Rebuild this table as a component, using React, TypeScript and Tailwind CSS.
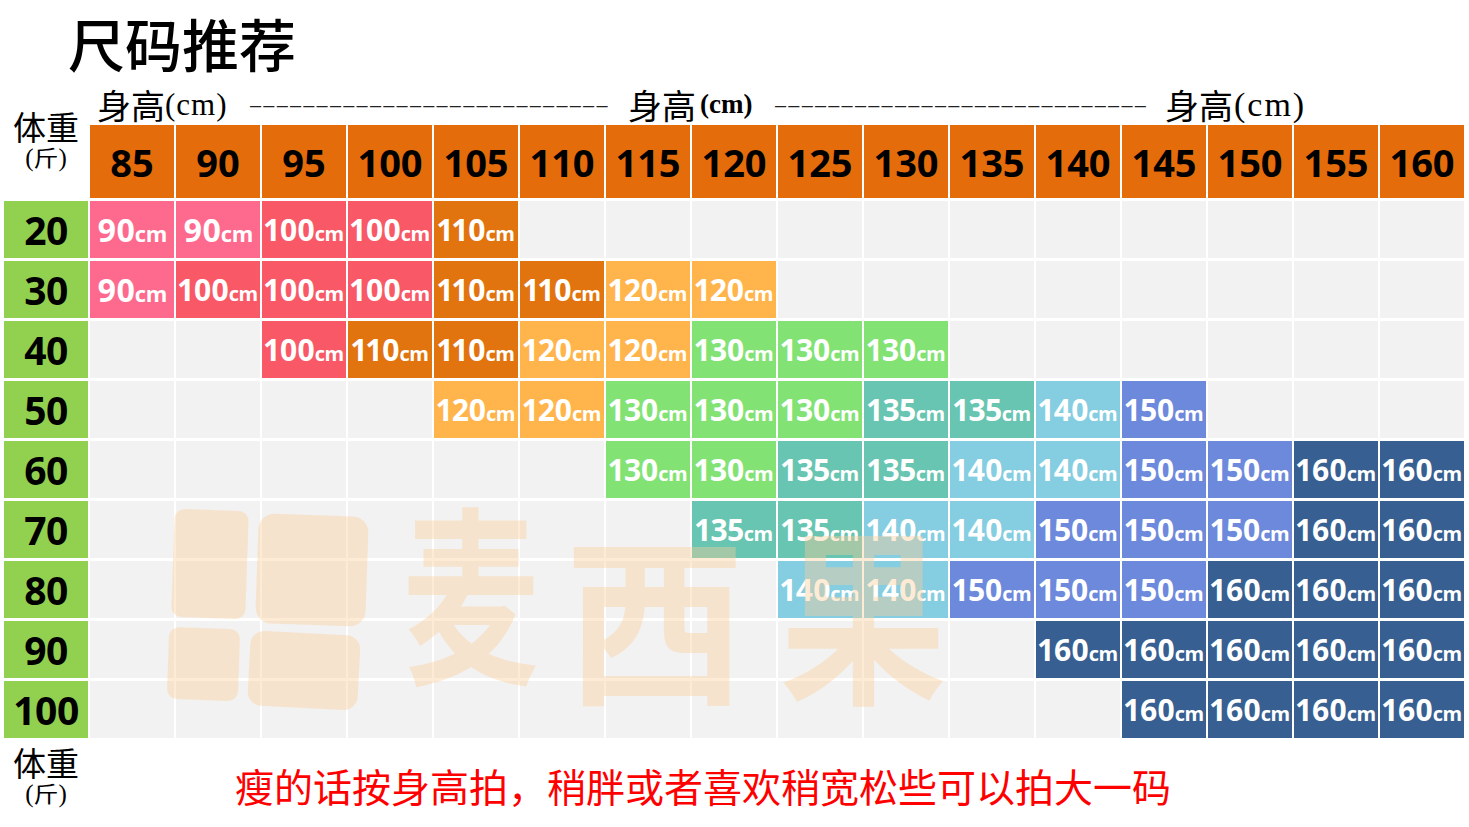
import React from "react";

const cols = [85, 90, 95, 100, 105, 110, 115, 120, 125, 130, 135, 140, 145, 150, 155, 160];

const rowsData: { w: number; start: number; vals: number[] }[] = [
  { w: 20, start: 0, vals: [90, 90, 100, 100, 110] },
  { w: 30, start: 0, vals: [90, 100, 100, 100, 110, 110, 120, 120] },
  { w: 40, start: 2, vals: [100, 110, 110, 120, 120, 130, 130, 130] },
  { w: 50, start: 4, vals: [120, 120, 130, 130, 130, 135, 135, 140, 150] },
  { w: 60, start: 6, vals: [130, 130, 135, 135, 140, 140, 150, 150, 160, 160] },
  { w: 70, start: 7, vals: [135, 135, 140, 140, 150, 150, 150, 160, 160] },
  { w: 80, start: 8, vals: [140, 140, 150, 150, 150, 160, 160, 160] },
  { w: 90, start: 11, vals: [160, 160, 160, 160, 160] },
  { w: 100, start: 12, vals: [160, 160, 160, 160] },
];

const colorOf: Record<number, string> = {
  90: "bg-[#fe6a8d]",
  100: "bg-[#f95966]",
  110: "bg-[#e2740f]",
  120: "bg-[#ffb54b]",
  130: "bg-[#82e374]",
  135: "bg-[#68c5b2]",
  140: "bg-[#85cde0]",
  150: "bg-[#6d89dc]",
  160: "bg-[#375f92]",
};

const DASHES_A = "–".repeat(27);
const DASHES_B = "–".repeat(28);

function Cell({ v }: { v: number | null }) {
  if (v === null) return <div className="bg-[#f2f2f2]" />;
  const two = v < 100;
  return (
    <div
      className={`${colorOf[v]} flex items-baseline justify-center font-['Open_Sans',sans-serif] font-bold leading-none text-white tracking-[-0.5px] proportional-nums ${two ? "pt-[13px]" : "pt-[14px]"}`}
    >
      <span className={two ? "text-[32px]" : "text-[30px]"}>{v}</span>
      <span className={two ? "text-[22px]" : "text-[20px]"}>cm</span>
    </div>
  );
}

function WeightLabel({ className }: { className?: string }) {
  return (
    <div className={`flex flex-col items-center text-black ${className ?? ""}`}>
      <span className="text-[33px] leading-none">体重</span>
      <span className="mt-[2px] flex items-center text-[25px] leading-none">
        <span className="font-['Liberation_Serif',serif] text-[25px]">(</span>
        <span className="scale-y-[0.85]">斤</span>
        <span className="font-['Liberation_Serif',serif] text-[25px]">)</span>
      </span>
    </div>
  );
}

export default function App() {
  const matrix = rowsData.map((r) => {
    const cells: (number | null)[] = cols.map(() => null);
    r.vals.forEach((v, i) => {
      cells[r.start + i] = v;
    });
    return { w: r.w, cells };
  });

  const wm = "text-[rgba(252,205,150,0.4)]";

  return (
    <div className="relative h-[827px] w-[1469px] overflow-hidden bg-white font-['Noto_Sans_CJK_SC',sans-serif] text-black">
      {/* Title */}
      <div className="flex h-[84px] items-center pl-[68px]">
        <h1 className="text-[57px] leading-none font-medium">尺码推荐</h1>
      </div>

      {/* Height labels */}
      <div className="flex h-[41px] items-center">
        <div className="ml-[97px] flex w-[153px] items-center">
          <span className="text-[34px] leading-none">身高</span>
          <span className="font-['Liberation_Serif',serif] text-[31px] leading-none tracking-[1px]">(cm)</span>
        </div>
        <div className="w-[362px] whitespace-nowrap font-['Liberation_Sans',sans-serif] text-[20px] leading-none tracking-[2.2px] text-[#222]">
          {DASHES_A}
        </div>
        <div className="ml-[16px] flex w-[147px] items-center">
          <span className="text-[34px] leading-none">身高</span>
          <span className="ml-[4px] font-['Liberation_Serif',serif] text-[27px] font-bold leading-none">(cm)</span>
        </div>
        <div className="w-[375px] whitespace-nowrap font-['Liberation_Sans',sans-serif] text-[20px] leading-none tracking-[2.2px] text-[#222]">
          {DASHES_B}
        </div>
        <div className="ml-[15px] flex items-center">
          <span className="text-[34px] leading-none">身高</span>
          <span className="ml-[1px] font-['Liberation_Serif',serif] text-[34px] leading-none tracking-[2px]">(cm)</span>
        </div>
      </div>

      {/* Grid */}
      <div className="ml-[4px] grid grid-cols-[repeat(17,84px)] grid-rows-[73px_repeat(9,57px)] gap-x-[2px] gap-y-[3px]">
        <WeightLabel className="-mt-[15px]" />
        {cols.map((c) => (
          <div
            key={c}
            className="flex items-center justify-center bg-[#e46c0a] font-['Open_Sans',sans-serif] text-[38px] font-bold leading-none text-black"
          >
            {c}
          </div>
        ))}
        {matrix.map((r) => (
          <React.Fragment key={r.w}>
            <div className="flex items-center justify-center bg-[#92d050] font-['Open_Sans',sans-serif] text-[39px] font-bold leading-none text-black tracking-[-0.5px]">
              {r.w}
            </div>
            {r.cells.map((v, i) => (
              <Cell key={i} v={v} />
            ))}
          </React.Fragment>
        ))}
      </div>

      {/* Bottom */}
      <div className="flex h-[89px] items-start">
        <WeightLabel className="ml-[4px] mt-[8px] w-[84px]" />
        <div className="ml-[147px] mt-[28px] text-[39px] leading-none text-[#ff0000]">
          瘦的话按身高拍，稍胖或者喜欢稍宽松些可以拍大一码
        </div>
      </div>

      {/* Watermark logo */}
      <svg
        className="pointer-events-none absolute left-[165px] top-[505px]"
        width="205"
        height="210"
        viewBox="0 0 205 210"
        aria-hidden="true"
      >
        <g fill="rgba(252,205,150,0.4)">
          <rect x="8" y="5" width="74" height="108" rx="10" transform="rotate(2 45 59)" />
          <rect x="92" y="10" width="110" height="110" rx="16" transform="rotate(2 147 65)" />
          <rect x="3" y="123" width="71" height="72" rx="10" transform="rotate(2 38 159)" />
          <rect x="84" y="128" width="110" height="75" rx="14" transform="rotate(3 139 165)" />
        </g>
      </svg>
      <div aria-hidden="true" className={`pointer-events-none absolute left-[376px] top-[492px] scale-x-[0.72] text-[190px] leading-none font-bold ${wm}`}>
        麦
      </div>
      <div aria-hidden="true" className={`pointer-events-none absolute left-[565px] top-[522px] text-[180px] leading-none font-bold ${wm}`}>
        西
      </div>
      <div aria-hidden="true" className={`pointer-events-none absolute left-[768px] top-[512px] scale-x-[0.88] text-[190px] leading-none font-bold ${wm}`}>
        果
      </div>
    </div>
  );
}
